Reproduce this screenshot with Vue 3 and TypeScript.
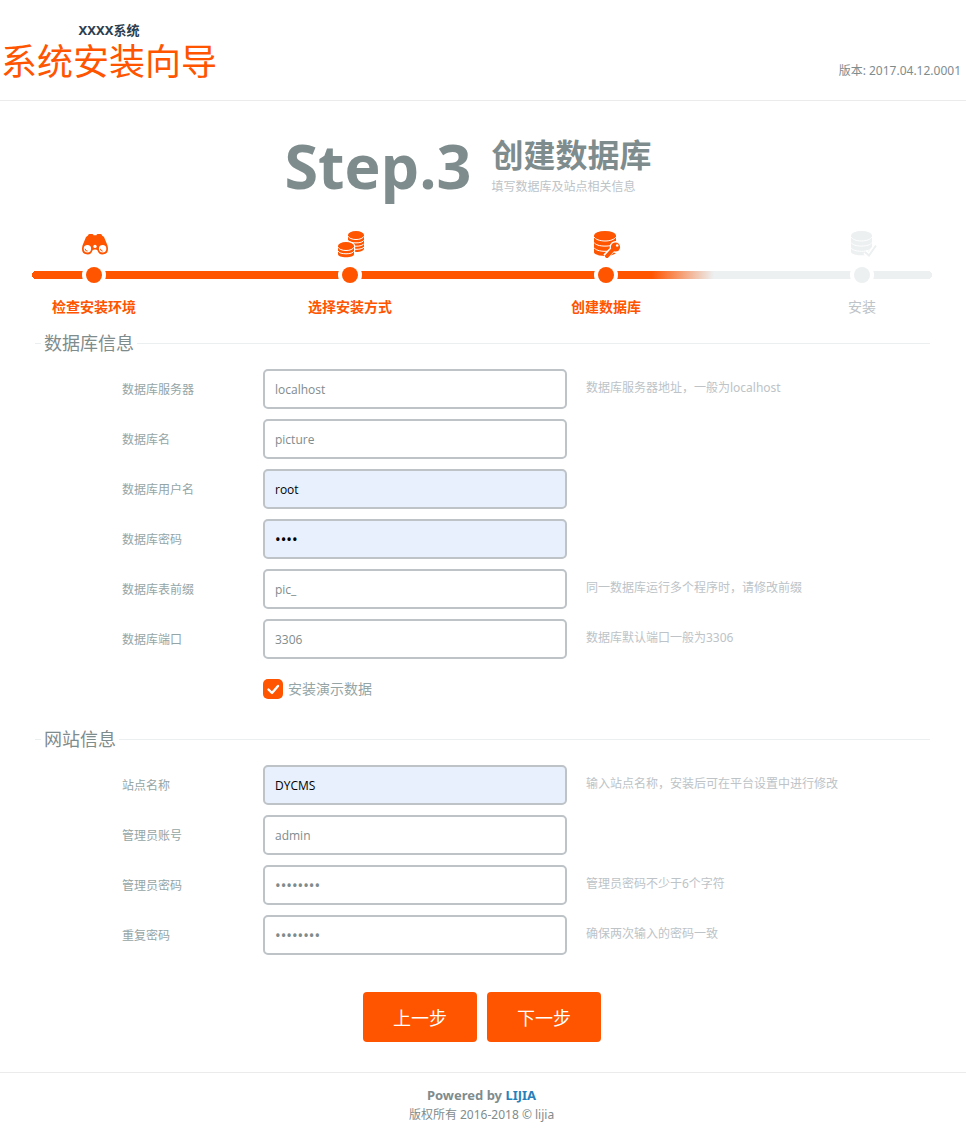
<script setup lang="ts">
import { ref } from 'vue'

interface Step {
  label: string
  icon: 'binoculars' | 'coins' | 'key' | 'check'
  done: boolean
}

interface Field {
  id: string
  label: string
  value: string
  type: 'text' | 'password'
  filled?: boolean
  hint?: string
}

const steps: Step[] = [
  { label: '检查安装环境', icon: 'binoculars', done: true },
  { label: '选择安装方式', icon: 'coins', done: true },
  { label: '创建数据库', icon: 'key', done: true },
  { label: '安装', icon: 'check', done: false },
]

const databaseFields = ref<Field[]>([
  { id: 'db-host', label: '数据库服务器', value: 'localhost', type: 'text', hint: '数据库服务器地址，一般为localhost' },
  { id: 'db-name', label: '数据库名', value: 'picture', type: 'text' },
  { id: 'db-user', label: '数据库用户名', value: 'root', type: 'text', filled: true },
  { id: 'db-password', label: '数据库密码', value: 'root', type: 'password', filled: true },
  { id: 'db-prefix', label: '数据库表前缀', value: 'pic_', type: 'text', hint: '同一数据库运行多个程序时，请修改前缀' },
  { id: 'db-port', label: '数据库端口', value: '3306', type: 'text', hint: '数据库默认端口一般为3306' },
])

const siteFields = ref<Field[]>([
  { id: 'site-name', label: '站点名称', value: 'DYCMS', type: 'text', filled: true, hint: '输入站点名称，安装后可在平台设置中进行修改' },
  { id: 'admin-name', label: '管理员账号', value: 'admin', type: 'text' },
  { id: 'admin-password', label: '管理员密码', value: 'admin123', type: 'password', hint: '管理员密码不少于6个字符' },
  { id: 'admin-repeat', label: '重复密码', value: 'admin123', type: 'password', hint: '确保两次输入的密码一致' },
])

const demoData = ref(true)
</script>

<template>
  <div class="page">
    <header class="header">
      <div class="brand">
        <strong class="brand-name">XXXX系统</strong>
        <h1 class="brand-title">系统安装向导</h1>
      </div>
      <span class="version">版本: 2017.04.12.0001</span>
    </header>

    <main class="main">
      <div class="headline">
        <span class="step-number">Step.3</span>
        <div>
          <h2 class="step-title">创建数据库</h2>
          <p class="step-text">填写数据库及站点相关信息</p>
        </div>
      </div>

      <ol class="steps">
        <li v-for="step in steps" :key="step.label" class="step" :class="{ done: step.done }">
          <svg class="step-icon" viewBox="0 0 28 28" aria-hidden="true">
            <g v-if="step.icon === 'binoculars'">
              <path d="M7 5.500Q7 4 8.500 4h2.500q1.500 0 1.500 1.200h3Q15.500 4 17 4h2.500Q21 4 21 5.500L23 7 26.500 15.500Q27 17.500 27 19A5.300 5.300 0 0 1 16.600 20.500Q16 19.500 14 19.500T11.400 20.500A5.300 5.300 0 0 1 1 19Q1 17.500 1.500 15.500L5 7Z" />
              <circle cx="6.400" cy="18.800" r="3.700" class="paper" />
              <circle cx="21.600" cy="18.800" r="3.700" class="paper" />
              <circle cx="14" cy="16.400" r="1.700" class="paper" />
              <path d="M4.200 18.800a2.300 2.300 0 0 0 2.300 2.300M19.400 18.800a2.300 2.300 0 0 0 2.300 2.300" class="line" />
            </g>
            <g v-else-if="step.icon === 'coins'">
              <path d="M11 5v13.500c0 2 3.600 3.500 8 3.500s8-1.500 8-3.500V5Z" />
              <ellipse cx="19" cy="5" rx="8" ry="4" />
              <path d="M11 6.200c1 2 4 3.300 8 3.300s7-1.300 8-3.300M11 10.200c1 1.800 4 2.700 8 2.700s7-1 8-2.700M11 13.600c1 1.800 4 2.600 8 2.600s7-.9 8-2.600M11 17c1 1.500 4 2.300 8 2.300s7-.8 8-2.300" class="groove" />
              <path d="M0 16c0-3 4-5 9-5s9.200 2 9.200 5v12H0Z" class="paper" />
              <path d="M1 16v8.200c0 1.900 3.600 3 8 3s8-1.100 8-3V16Z" />
              <ellipse cx="9" cy="16" rx="8" ry="4" />
              <path d="M1 17.200c1 2 4 3.300 8 3.300s7-1.300 8-3.300M1 21.100c1 1.800 4 2.700 8 2.700s7-.9 8-2.700" class="groove" />
            </g>
            <g v-else-if="step.icon === 'key'">
              <path d="M1 5.500v16.800c0 2 5 3.700 11 3.700s11-1.700 11-3.700V5.500Z" />
              <ellipse cx="12" cy="5.500" rx="11" ry="4.500" />
              <path d="M1 7c1.500 2.300 5.500 4 11 4s9.500-1.700 11-4M1 12.500c1.500 2.300 5.500 3.600 11 3.600s9.500-1.300 11-3.600M1 17.700c1.500 2.300 5.500 3.600 11 3.600s9.500-1.300 11-3.600" class="groove" />
              <circle cx="22.500" cy="17" r="5.900" class="paper" />
              <path d="m20 19-7.500 7.500" class="key-gap" />
              <path d="m19.500 20-5.500 6" class="key-shaft" />
              <circle cx="22.500" cy="17" r="4.600" />
              <circle cx="24.200" cy="15.500" r="1.300" class="paper" />
            </g>
            <g v-else>
              <path d="M2 5.500v16.300c0 2 4.700 3.500 10.500 3.500S23 23.800 23 21.800V5.500Z" />
              <ellipse cx="12.500" cy="5.500" rx="10.500" ry="4.500" />
              <path d="M2 7c1.500 2.300 5.200 4 10.500 4S21.500 9.300 23 7M2 12.500c1.500 2.300 5.200 3.600 10.500 3.600S21.500 14.800 23 12.500M2 17.700c1.500 2.300 5.200 3.600 10.500 3.600S21.500 20 23 17.700" class="groove" />
              <path d="m16 22 4 3.500 7-10" class="check-gap" />
              <path d="m16 22 4 3.500 7-10" class="check-line" />
            </g>
          </svg>
          <span class="dot"></span>
          <span class="step-label">{{ step.label }}</span>
        </li>
      </ol>

      <form class="form" @submit.prevent>
        <fieldset class="group">
          <legend class="legend">数据库信息</legend>
          <div v-for="field in databaseFields" :key="field.id" class="row">
            <label class="label" :for="field.id">{{ field.label }}</label>
            <input :id="field.id" v-model="field.value" class="input" :class="{ filled: field.filled, secret: field.type === 'password' }" :type="field.type" autocomplete="off" />
            <span class="hint">{{ field.hint }}</span>
          </div>
          <div class="row">
            <label class="demo">
              <input v-model="demoData" class="demo-input" type="checkbox" />
              <span class="demo-box">
                <svg v-if="demoData" viewBox="0 0 20 20" aria-hidden="true"><path d="m5.500 10.500 3.500 3.500 6-7" /></svg>
              </span>
              安装演示数据
            </label>
          </div>
        </fieldset>

        <fieldset class="group">
          <legend class="legend">网站信息</legend>
          <div v-for="field in siteFields" :key="field.id" class="row">
            <label class="label" :for="field.id">{{ field.label }}</label>
            <input :id="field.id" v-model="field.value" class="input" :class="{ filled: field.filled, secret: field.type === 'password' }" :type="field.type" autocomplete="off" />
            <span class="hint">{{ field.hint }}</span>
          </div>
        </fieldset>

        <div class="actions">
          <button class="button" type="button">上一步</button>
          <button class="button" type="submit">下一步</button>
        </div>
      </form>
    </main>

    <footer class="footer">
      <strong class="powered">Powered by <a class="link" href="#">LIJIA</a></strong>
      <span>版权所有 2016-2018 © lijia</span>
    </footer>
  </div>
</template>

<style>
body {
  margin: 0;
  background: #fff;
}
</style>

<style scoped>
.page {
  font-family: "Noto Sans", "Noto Sans CJK SC", sans-serif;
  font-size: 12px;
  line-height: 20px;
  color: #7f8c8d;
}

.page * {
  box-sizing: border-box;
}

.header {
  display: flex;
  justify-content: space-between;
  align-items: flex-end;
  padding: 20px 5px 0 1px;
  border-bottom: 1px solid #ebebeb;
}

.brand {
  display: flex;
  flex-direction: column;
  align-items: center;
}

.brand-name {
  font-size: 13px;
  color: #2c3e50;
}

.brand-title {
  margin: 0;
  padding-bottom: 16px;
  font-size: 36px;
  line-height: 44px;
  font-weight: 400;
  color: #ff5400;
}

.version {
  margin-bottom: 19px;
}

.main {
  width: 100%;
  max-width: 902px;
  margin: 0 auto;
}

.headline {
  display: flex;
  justify-content: center;
  align-items: flex-start;
  gap: 20px;
  padding: 28px 30px 0 0;
}

.step-number {
  font-family: "Open Sans", sans-serif;
  font-size: 61px;
  line-height: 74px;
  font-weight: 700;
}

.step-title {
  margin: 4px 0 0;
  font-size: 32px;
  line-height: 44px;
  font-weight: 700;
}

.step-text {
  margin: 0;
  color: #bdc3c7;
}

.steps {
  display: flex;
  justify-content: space-between;
  margin: 27px 2px 0 0;
  padding: 0 8px 0 0;
  list-style: none;
  background:
    radial-gradient(circle at 4px 4px, #ff5400 4px, transparent 4px) 0 41px / 8px 8px no-repeat,
    linear-gradient(90deg, #ff5400 69%, #ecf0f1 76%) 4px 41px / calc(100% - 8px) 8px no-repeat,
    radial-gradient(circle at 4px 4px, #ecf0f1 4px, transparent 4px) 100% 41px / 8px 8px no-repeat;
}

.step {
  display: flex;
  flex-direction: column;
  align-items: center;
  width: 124px;
  font-size: 14px;
  color: #bdc3c7;
}

.step-icon {
  width: 28px;
  height: 28px;
  margin: 0 0 9px 2px;
  fill: #ecf0f1;
}

.done .step-icon {
  fill: #ff5400;
}

.step-icon .paper {
  fill: #fff;
}

.step-icon .line {
  fill: none;
  stroke: #ff5400;
}

.step-icon .groove {
  fill: none;
  stroke: #fff;
}

.step-icon .key-gap {
  stroke: #fff;
  stroke-width: 6px;
}

.step-icon .key-shaft {
  stroke: #ff5400;
  stroke-width: 4px;
  stroke-linecap: round;
}

.step-icon .check-gap {
  fill: none;
  stroke: #fff;
  stroke-width: 5px;
}

.step-icon .check-line {
  fill: none;
  stroke: #ecf0f1;
  stroke-width: 2px;
}

.dot {
  width: 16px;
  height: 16px;
  border-radius: 50%;
  background: #ecf0f1;
  box-shadow: 0 0 0 4px #fff;
}

.done .dot {
  background: #ff5400;
}

.step-label {
  margin-top: 14px;
}

.done .step-label {
  font-weight: 700;
  color: #ff5400;
}

.form {
  padding-top: 14px;
}

.group {
  min-width: 0;
  margin: 0 4px 8px 3px;
  padding: 14px 0 0;
  border: 0;
  border-top: 1px solid #ebefef;
}

.legend {
  margin-left: 6px;
  padding: 0 3px;
  font-size: 18px;
  line-height: 24px;
}

.row {
  display: grid;
  grid-template-columns: 141px 304px minmax(0, 1fr);
  align-items: center;
  min-height: 40px;
  margin-bottom: 10px;
  padding-left: 87px;
}

.label {
  padding-top: 2px;
  color: #95a5a6;
}

.input {
  width: 100%;
  height: 40px;
  padding: 0 10px;
  border: 2px solid #bdc3c7;
  border-radius: 5px;
  background: #fff;
  font-family: "Open Sans", "Noto Sans CJK SC", sans-serif;
  font-size: 12px;
  color: #7f8c8d;
}

.secret {
  font-family: "Noto Sans", sans-serif;
  font-size: 15px;
}

.filled {
  background: #e8f0fe;
  color: #000;
}

.hint {
  padding: 0 0 3px 19px;
  color: #bdc3c7;
}

.demo {
  position: relative;
  grid-column: 2;
  display: flex;
  align-items: center;
  gap: 5px;
  font-size: 14px;
  color: #95a5a6;
}

.demo-input {
  position: absolute;
  width: 20px;
  height: 20px;
  margin: 0;
  opacity: 0;
}

.demo-box {
  width: 20px;
  height: 20px;
  border-radius: 5px;
  background: #ff5400;
}

.demo-box svg {
  display: block;
  fill: none;
  stroke: #fff;
  stroke-width: 2.400;
  stroke-linecap: round;
  stroke-linejoin: round;
}

.actions {
  display: flex;
  justify-content: center;
  gap: 10px;
  padding: 19px 2px 30px 0;
}

.button {
  height: 50px;
  padding: 0 30px;
  border: 0;
  border-radius: 4px;
  background: #ff5400;
  font-family: inherit;
  font-size: 18px;
  color: #fff;
}

.footer {
  display: flex;
  flex-direction: column;
  align-items: center;
  padding: 12px 3px 5px 0;
  border-top: 1px solid #ebebeb;
}

.powered {
  font-size: 13px;
}

.link {
  color: #2980b9;
  text-decoration: none;
}
</style>
